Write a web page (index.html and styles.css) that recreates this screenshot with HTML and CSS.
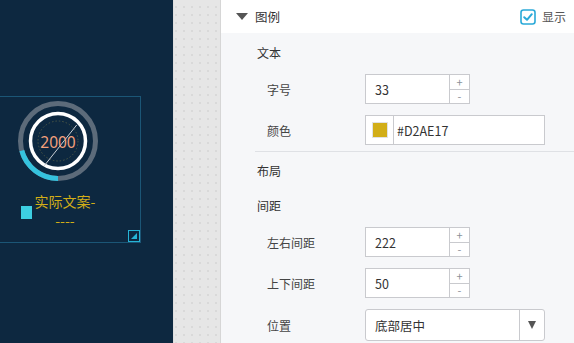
FILE: index.html
```html
<!DOCTYPE html>
<html lang="zh-CN">
<head>
    <meta charset="UTF-8">
    <title>图例设置</title>
    <link rel="stylesheet" href="styles.css">
</head>
<body>
    <div class="canvas">
        <div class="widget">
            <svg class="gauge" width="82" height="82" viewBox="0 0 82 82">
                <circle cx="41" cy="41" r="37.5" fill="none" stroke="#5c6b7a" stroke-width="5"/>
                <path d="M41 78.5 A37.5 37.5 0 0 1 4.8 50.7" fill="none" stroke="#35c3df" stroke-width="5"/>
                <circle cx="41" cy="41" r="27.5" fill="none" stroke="#ffffff" stroke-width="3.5"/>
                <circle cx="41" cy="41" r="20" fill="none" stroke="#4a5646" stroke-width="1" stroke-dasharray="1.5 2"/>
                <line x1="27.3" y1="65.7" x2="59.7" y2="25" stroke="#c9ced4" stroke-width="1"/>
                <text x="41" y="47.5" text-anchor="middle" class="gauge-value">2000</text>
            </svg>
            <div class="legend">
                <span class="legend-mark"></span>
                <div class="legend-text">
                    <div>实际文案-</div>
                    <div>----</div>
                </div>
            </div>
            <svg class="resize-handle" width="12" height="12" viewBox="0 0 12 12">
                <rect x="0.5" y="0.5" width="11" height="11" fill="none" stroke="#25b4d6"/>
                <path d="M9 3 L9 9 L3 9 Z" fill="#25b4d6"/>
            </svg>
        </div>
    </div>

    <div class="ruler"></div>

    <div class="panel">
        <div class="panel-head">
            <span class="caret"></span>
            <span class="panel-name">图例</span>
            <label class="toggle">
                <svg width="16" height="16" viewBox="0 0 16 16">
                    <rect x="1" y="1" width="14" height="14" rx="2.5" fill="#fff" stroke="#2aa9d8" stroke-width="1.6"/>
                    <path d="M4.2 8.2 L7 10.8 L11.8 5.2" fill="none" stroke="#2aa9d8" stroke-width="2" stroke-linecap="round" stroke-linejoin="round"/>
                </svg>
                显示
            </label>
        </div>

        <div class="panel-body">
            <div class="group-title">文本</div>
            <div class="fields">
                <div class="field">
                    <span class="field-label">字号</span>
                    <div class="spinner">
                        <span class="input-value">33</span>
                        <div class="spinner-btns"><span>+</span><span>-</span></div>
                    </div>
                </div>
                <div class="field">
                    <span class="field-label">颜色</span>
                    <div class="color-input">
                        <span class="swatch-box"><span class="swatch"></span></span>
                        <span class="input-value">#D2AE17</span>
                    </div>
                </div>
            </div>

            <div class="divider"></div>

            <div class="group-title">布局</div>
            <div class="group-title">间距</div>
            <div class="fields">
                <div class="field">
                    <span class="field-label">左右间距</span>
                    <div class="spinner">
                        <span class="input-value">222</span>
                        <div class="spinner-btns"><span>+</span><span>-</span></div>
                    </div>
                </div>
                <div class="field">
                    <span class="field-label">上下间距</span>
                    <div class="spinner">
                        <span class="input-value">50</span>
                        <div class="spinner-btns"><span>+</span><span>-</span></div>
                    </div>
                </div>
                <div class="field">
                    <span class="field-label">位置</span>
                    <div class="select">
                        <span class="input-value">底部居中</span>
                        <span class="select-arrow"><span class="arrow"></span></span>
                    </div>
                </div>
            </div>
        </div>
    </div>
</body>
</html>
```

FILE: styles.css
```css
body {
    margin: 0;
    height: 343px;
    display: flex;
    overflow: hidden;
    font-family: "Noto Sans CJK SC", "Noto Sans", sans-serif;
    font-size: 12px;
    color: #3a3a3a;
}

/* canvas on the left */
.canvas {
    width: 173px;
    flex-shrink: 0;
    background: #0d2840;
    position: relative;
    overflow: hidden;
}

.widget {
    position: absolute;
    left: -20px;
    top: 96px;
    width: 154px;
    height: 142px;
    border: 1px solid #1b5676;
    display: flex;
    flex-direction: column;
    align-items: center;
    padding: 3px 5px 0 0;
}

.gauge-value {
    font-family: "Noto Sans", sans-serif;
    font-size: 15.5px;
    fill: #f3a07c;
}

.legend {
    display: flex;
    align-items: center;
    gap: 3px;
    margin-top: 10px;
}

.legend-mark {
    width: 11px;
    height: 13px;
    margin-top: 3px;
    background: #3dcfe2;
}

.legend-text {
    color: #d2ae17;
    font-size: 14px;
    line-height: 19px;
    text-align: center;
}

.resize-handle {
    position: absolute;
    right: 0;
    bottom: 0;
}

/* dotted strip */
.ruler {
    width: 46px;
    flex-shrink: 0;
    border-left: 1px solid #dedede;
    border-right: 1px solid #d6d6d6;
    background-color: #d9d9d9;
    background-image:
        linear-gradient(to right, transparent 2px, #e6e6e6 2px),
        linear-gradient(to bottom, transparent 2px, #e6e6e6 2px);
    background-size: 8px 8px;
    background-position: 1px 6px;
}

/* property panel */
.panel {
    flex: 1;
    background: #f6f7f9;
}

.panel-head {
    height: 33px;
    background: #fff;
    display: flex;
    align-items: center;
    padding: 0 8px 0 15px;
}

.caret {
    width: 0;
    height: 0;
    border-left: 6px solid transparent;
    border-right: 6px solid transparent;
    border-top: 7px solid #555;
    margin-right: 7px;
}

.panel-name {
    font-size: 12.5px;
    color: #333;
}

.toggle {
    margin-left: auto;
    display: flex;
    align-items: center;
    gap: 6px;
    color: #555;
}

.toggle svg {
    display: block;
}

.panel-body {
    padding-top: 2px;
}

.group-title {
    height: 35px;
    line-height: 35px;
    padding-left: 36px;
    color: #333;
}

.fields {
    display: flex;
    flex-direction: column;
    gap: 11px;
    padding-top: 4px;
}

.field {
    display: flex;
    align-items: center;
    padding-left: 46px;
}

.field-label {
    width: 98px;
    color: #444;
}

.input-value {
    flex: 1;
    padding-left: 9px;
    font-size: 12.5px;
    color: #333;
}

.spinner {
    width: 103px;
    height: 28px;
    border: 1px solid #c9cace;
    background: #fff;
    display: flex;
    align-items: center;
}

.spinner-btns {
    width: 19px;
    height: 100%;
    border-left: 1px solid #c9cace;
    display: flex;
    flex-direction: column;
}

.spinner-btns span {
    flex: 1;
    display: flex;
    align-items: center;
    justify-content: center;
    color: #8a9099;
    font-size: 11px;
    line-height: 10px;
}

.spinner-btns span + span {
    border-top: 1px solid #c9cace;
}

.color-input {
    width: 178px;
    height: 28px;
    border: 1px solid #c9cace;
    background: #fff;
    display: flex;
    align-items: center;
}

.swatch-box {
    width: 27px;
    height: 100%;
    border-right: 1px solid #c9cace;
    display: flex;
    align-items: center;
    justify-content: center;
}

.swatch {
    width: 14px;
    height: 14px;
    background: #d2ae17;
    border: 1px solid #e2e2e2;
}

.color-input .input-value {
    padding-left: 3px;
}

.divider {
    height: 1px;
    background: #dfe1e5;
    margin: 6px 0 1px 34px;
}

.select {
    width: 178px;
    height: 30px;
    border: 1px solid #c9cace;
    border-radius: 3px;
    background: #fff;
    display: flex;
    align-items: center;
}

.select-arrow {
    width: 24px;
    height: 100%;
    border-left: 1px solid #c9cace;
    display: flex;
    align-items: center;
    justify-content: center;
}

.arrow {
    width: 0;
    height: 0;
    border-left: 4px solid transparent;
    border-right: 4px solid transparent;
    border-top: 8px solid #555;
}
```
